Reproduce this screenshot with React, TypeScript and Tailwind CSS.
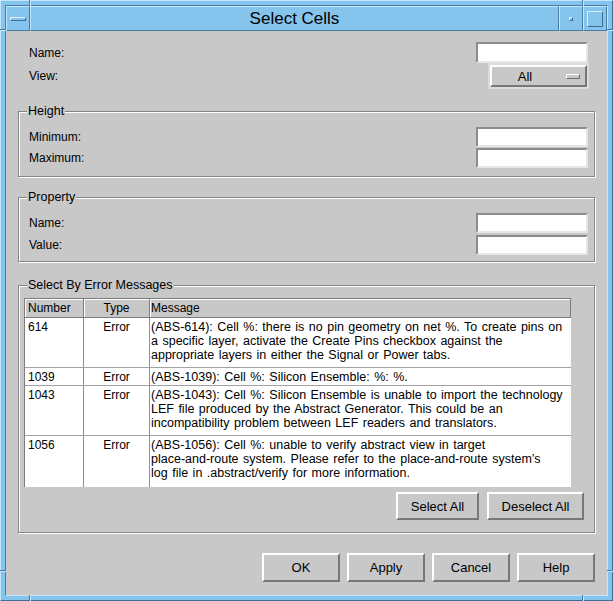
import React from "react";

function Field({ className = "" }: { className?: string }) {
  return (
    <div
      className={
        "w-[112px] h-[20px] bg-white border-2 border-t-[#8c8c8c] border-l-[#8c8c8c] border-b-[#e6e6e6] border-r-[#e6e6e6] " +
        className
      }
    />
  );
}

function Btn({ className = "", children }: { className?: string; children: React.ReactNode }) {
  return (
    <div
      className={
        "flex items-center justify-center bg-[#c8c8c8] border-2 border-t-white border-l-white border-b-[#777777] border-r-[#777777] text-[13px] leading-none " +
        className
      }
    >
      {children}
    </div>
  );
}

function Group({
  title,
  className = "",
  children,
}: {
  title: string;
  className?: string;
  children: React.ReactNode;
}) {
  return (
    <div
      className={
        "relative mx-[12px] shrink-0 border border-[#858585] shadow-[inset_1px_1px_0_#ffffff,1px_1px_0_#ffffff] " +
        className
      }
    >
      <span className="absolute left-[8px] top-[-8px] bg-[#c8c8c8] px-[1px] text-[12.5px] leading-[14px]">
        {title}
      </span>
      {children}
    </div>
  );
}

function LabeledField({ label, className = "" }: { label: string; className?: string }) {
  return (
    <div className={"flex items-center justify-between h-[20px] " + className}>
      <span className="leading-none">{label}</span>
      <Field />
    </div>
  );
}

const rows = [
  {
    n: "614",
    h: "h-[50px]",
    lines: [
      "(ABS-614): Cell %: there is no pin geometry on net %. To create pins on",
      "a specific layer, activate the Create Pins checkbox against the",
      "appropriate layers in either the Signal or Power tabs.",
    ],
  },
  {
    n: "1039",
    h: "h-[18px]",
    lines: ["(ABS-1039): Cell %: Silicon Ensemble: %: %."],
  },
  {
    n: "1043",
    h: "h-[50px]",
    lines: [
      "(ABS-1043): Cell %: Silicon Ensemble is unable to import the technology",
      "LEF file produced by the Abstract Generator. This could be an",
      "incompatibility problem between LEF readers and translators.",
    ],
  },
  {
    n: "1056",
    h: "h-[51px]",
    lines: [
      "(ABS-1056): Cell %: unable to verify abstract view in target",
      "place-and-route system. Please refer to the place-and-route system\u2019s",
      "log file in .abstract/verify for more information.",
    ],
  },
];

export default function App() {
  return (
    <div className="relative w-[613px] h-[601px] overflow-hidden font-['Liberation_Sans',Arial,sans-serif] text-black">
      <div className="w-full h-full bg-[#85c4ec] border border-t-[#c4e6fc] border-l-[#c4e6fc] border-b-[#3f6e94] border-r-[#3f6e94] p-[4px]">
        <div className="w-full h-full flex flex-col border border-t-[#4a7ba2] border-l-[#4a7ba2] border-b-[#c4e6fc] border-r-[#c4e6fc]">
          {/* Title bar */}
          <div className="flex h-[25px] shrink-0">
            <div className="w-[24px] h-full flex items-center justify-center border border-t-[#c4e6fc] border-l-[#c4e6fc] border-b-[#4a7ba2] border-r-[#4a7ba2]">
              <div className="w-[16px] h-[4px] border border-t-[#dcf0fd] border-l-[#dcf0fd] border-b-[#3f6e94] border-r-[#3f6e94]" />
            </div>
            <div className="flex-1 h-full flex items-center justify-center border border-t-[#c4e6fc] border-l-[#c4e6fc] border-b-[#4a7ba2] border-r-[#4a7ba2] text-[17px] leading-none">
              Select Cells
            </div>
            <div className="w-[24px] h-full flex items-center justify-center border border-t-[#c4e6fc] border-l-[#c4e6fc] border-b-[#4a7ba2] border-r-[#4a7ba2]">
              <div className="w-[4px] h-[4px] border border-t-[#dcf0fd] border-l-[#dcf0fd] border-b-[#3f6e94] border-r-[#3f6e94]" />
            </div>
            <div className="w-[24px] h-full flex items-center justify-center border border-t-[#c4e6fc] border-l-[#c4e6fc] border-b-[#4a7ba2] border-r-[#4a7ba2]">
              <div className="w-[16px] h-[16px] border border-t-[#dcf0fd] border-l-[#dcf0fd] border-b-[#3f6e94] border-r-[#3f6e94]" />
            </div>
          </div>

          {/* Content */}
          <div className="flex-1 bg-[#c8c8c8] flex flex-col text-[12px]">
            {/* Name / View */}
            <div className="flex flex-col pt-[11px] pl-[23px] pr-[19px] shrink-0">
              <div className="flex items-center justify-between h-[21px]">
                <span className="leading-none">Name:</span>
                <Field className="h-[21px]" />
              </div>
              <div className="flex items-center justify-between h-[26px]">
                <span className="leading-none">View:</span>
                <div className="w-[101px] h-[26px] mr-[-1px] border-2 border-[#dcdcdc]">
                  <div className="w-full h-full flex items-center border-2 border-t-white border-l-white border-b-[#777777] border-r-[#777777]">
                    <span className="flex-1 text-center text-[13px] leading-none pr-[8px]">All</span>
                    <div className="w-[14px] h-[5px] mr-[5px] border border-t-white border-l-white border-b-[#6e6e6e] border-r-[#6e6e6e] bg-[#c8c8c8]" />
                  </div>
                </div>
              </div>
            </div>

            {/* Height */}
            <Group title="Height" className="mt-[22px] h-[66px]">
              <div className="flex flex-col gap-[1px] pt-[15px] pl-[10px] pr-[6px]">
                <LabeledField label="Minimum:" />
                <LabeledField label="Maximum:" />
              </div>
            </Group>

            {/* Property */}
            <Group title="Property" className="mt-[20px] h-[65px]">
              <div className="flex flex-col gap-[2px] pt-[15px] pl-[10px] pr-[6px]">
                <LabeledField label="Name:" />
                <LabeledField label="Value:" />
              </div>
            </Group>

            {/* Select By Error Messages */}
            <Group title="Select By Error Messages" className="mt-[23px] h-[248px]">
              <div className="flex flex-col">
                <div className="mt-[12px] ml-[5px] w-[547px] border-l border-t border-[#7c7c7c]">
                  <div className="flex h-[19px] border-b border-[#7c7c7c] bg-[#c8c8c8] leading-[14px]">
                    <div className="w-[59px] h-full flex items-center pl-[3px] border-r border-[#7c7c7c] shadow-[inset_1px_1px_0_#ffffff]">
                      Number
                    </div>
                    <div className="w-[66px] h-full flex items-center justify-center border-r border-[#7c7c7c] shadow-[inset_1px_1px_0_#ffffff]">
                      Type
                    </div>
                    <div className="flex-1 h-full flex items-center pl-[1px] border-r border-[#7c7c7c] shadow-[inset_1px_1px_0_#ffffff]">
                      Message
                    </div>
                  </div>
                  {rows.map((r, i) => (
                    <div
                      key={r.n}
                      className={
                        "flex bg-white leading-[14px] " +
                        r.h +
                        (i < rows.length - 1 ? " border-b border-[#a2a2a2]" : "")
                      }
                    >
                      <div className="w-[59px] h-full pt-[2px] pl-[3px] border-r border-[#8e8e8e]">{r.n}</div>
                      <div className="w-[66px] h-full pt-[2px] text-center border-r border-[#8e8e8e]">Error</div>
                      <div className="flex-1 h-full pt-[2px] pl-[1px] text-[12.5px] [word-spacing:1px]">
                        {r.lines.map((l) => (
                          <div key={l} className="whitespace-nowrap">
                            {l}
                          </div>
                        ))}
                      </div>
                    </div>
                  ))}
                </div>
                <div className="flex justify-end gap-[8px] mt-[5px] pr-[10px]">
                  <Btn className="w-[83px] h-[28px]">Select All</Btn>
                  <Btn className="w-[97px] h-[28px]">Deselect All</Btn>
                </div>
              </div>
            </Group>

            {/* Dialog buttons */}
            <div className="flex justify-end gap-[7px] mt-[20px] pr-[12px] shrink-0">
              <Btn className="w-[78px] h-[29px]">OK</Btn>
              <Btn className="w-[78px] h-[29px]">Apply</Btn>
              <Btn className="w-[78px] h-[29px]">Cancel</Btn>
              <Btn className="w-[78px] h-[29px]">Help</Btn>
            </div>
          </div>
        </div>
      </div>

      {/* frame corner notches */}
      <div className="absolute left-[29px] top-0 w-[1px] h-[6px] bg-[#4a7ba2]" />
      <div className="absolute left-[30px] top-0 w-[1px] h-[6px] bg-[#c4e6fc]" />
      <div className="absolute left-[582px] top-0 w-[1px] h-[6px] bg-[#4a7ba2]" />
      <div className="absolute left-[583px] top-0 w-[1px] h-[6px] bg-[#c4e6fc]" />
      <div className="absolute left-[29px] top-[595px] w-[1px] h-[6px] bg-[#4a7ba2]" />
      <div className="absolute left-[30px] top-[595px] w-[1px] h-[6px] bg-[#c4e6fc]" />
      <div className="absolute left-[582px] top-[595px] w-[1px] h-[6px] bg-[#4a7ba2]" />
      <div className="absolute left-[583px] top-[595px] w-[1px] h-[6px] bg-[#c4e6fc]" />
      <div className="absolute left-0 top-[29px] w-[6px] h-[1px] bg-[#4a7ba2]" />
      <div className="absolute left-0 top-[30px] w-[6px] h-[1px] bg-[#c4e6fc]" />
      <div className="absolute left-[607px] top-[29px] w-[6px] h-[1px] bg-[#4a7ba2]" />
      <div className="absolute left-[607px] top-[30px] w-[6px] h-[1px] bg-[#c4e6fc]" />
      <div className="absolute left-0 top-[570px] w-[6px] h-[1px] bg-[#4a7ba2]" />
      <div className="absolute left-0 top-[571px] w-[6px] h-[1px] bg-[#c4e6fc]" />
      <div className="absolute left-[607px] top-[570px] w-[6px] h-[1px] bg-[#4a7ba2]" />
      <div className="absolute left-[607px] top-[571px] w-[6px] h-[1px] bg-[#c4e6fc]" />
    </div>
  );
}
